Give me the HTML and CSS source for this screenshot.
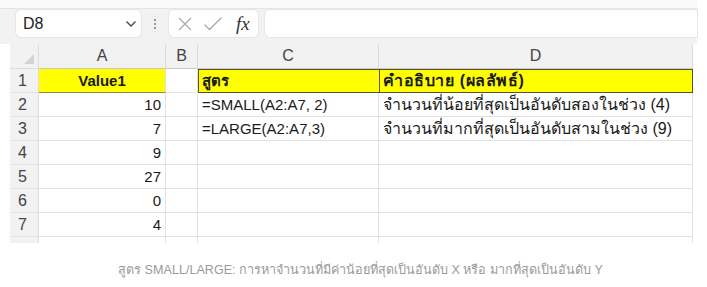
FILE: index.html
```html
<!DOCTYPE html>
<html lang="th">

<head>
    <meta charset="UTF-8">
    <meta name="viewport" content="width=device-width, initial-scale=1.0">
    <title>SMALL / LARGE</title>
    <link rel="stylesheet" href="styles.css">
</head>

<body>
    <div class="shot">
        <div class="top-strip"></div>

        <div class="fbar">
            <div class="namebox">
                <span>D8</span>
                <svg class="chev" width="12" height="8" viewBox="0 0 12 8">
                    <path d="M1.5 1.5 L6 6 L10.5 1.5" fill="none" stroke="#444" stroke-width="1.3"/>
                </svg>
            </div>
            <div class="grip"><i></i><i></i><i></i></div>
            <div class="fxbox">
                <svg width="16" height="16" viewBox="0 0 16 16">
                    <path d="M2 2 L14 14 M14 2 L2 14" stroke="#a8a8a8" stroke-width="1.3"/>
                </svg>
                <svg width="20" height="16" viewBox="0 0 20 16">
                    <path d="M1.5 8.5 L6.5 13.5 L18.5 1.5" fill="none" stroke="#a8a8a8" stroke-width="1.3"/>
                </svg>
                <span class="fx">fx</span>
            </div>
            <div class="finput"></div>
        </div>

        <div class="sheet">
            <div class="corner"><span class="tri"></span></div>
            <div class="colhead">A</div>
            <div class="colhead">B</div>
            <div class="colhead">C</div>
            <div class="colhead">D</div>

            <div class="rowhead">1</div>
            <div class="cell hl center bold a1">Value1</div>
            <div class="cell"></div>
            <div class="cell hl boxed bold">สูตร</div>
            <div class="cell hl boxed bold thai wide last">คำอธิบาย (ผลลัพธ์)</div>

            <div class="rowhead">2</div>
            <div class="cell num">10</div>
            <div class="cell"></div>
            <div class="cell">=SMALL(A2:A7, 2)</div>
            <div class="cell thai">จำนวนที่น้อยที่สุดเป็นอันดับสองในช่วง (4)</div>

            <div class="rowhead">3</div>
            <div class="cell num">7</div>
            <div class="cell"></div>
            <div class="cell">=LARGE(A2:A7,3)</div>
            <div class="cell thai">จำนวนที่มากที่สุดเป็นอันดับสามในช่วง (9)</div>

            <div class="rowhead">4</div>
            <div class="cell num">9</div>
            <div class="cell"></div>
            <div class="cell"></div>
            <div class="cell"></div>

            <div class="rowhead">5</div>
            <div class="cell num">27</div>
            <div class="cell"></div>
            <div class="cell"></div>
            <div class="cell"></div>

            <div class="rowhead">6</div>
            <div class="cell num">0</div>
            <div class="cell"></div>
            <div class="cell"></div>
            <div class="cell"></div>

            <div class="rowhead">7</div>
            <div class="cell num">4</div>
            <div class="cell"></div>
            <div class="cell"></div>
            <div class="cell"></div>

            <div class="rowhead stub"></div>
            <div class="cell stub"></div>
            <div class="cell stub"></div>
            <div class="cell stub"></div>
            <div class="cell stub"></div>
        </div>
    </div>

    <p class="caption">สูตร SMALL/LARGE: การหาจำนวนที่มีค่าน้อยที่สุดเป็นอันดับ X หรือ มากที่สุดเป็นอันดับ Y</p>
</body>

</html>
```

FILE: styles.css
```css
body {
    margin: 0;
    background: white;
    font-family: "Liberation Sans", "Noto Sans", sans-serif;
}

.shot {
    width: 697px;
}

.top-strip {
    height: 8px;
    background: #fafafa;
    border-bottom: 1px solid #e4e4e4;
}

.fbar {
    display: flex;
    align-items: center;
    height: 35px;
    padding: 0 0 6px 16px;
    background: #f2f2f2;
    box-sizing: border-box;
}

.namebox {
    width: 125px;
    height: 27px;
    background: white;
    border-radius: 5px;
    box-shadow: 0 0 0 1px #e6e6e6;
    display: flex;
    align-items: center;
    justify-content: space-between;
    padding: 0 4px 0 7px;
    box-sizing: border-box;
    font-size: 16px;
    color: #222;
}

.grip {
    width: 28px;
    display: flex;
    flex-direction: column;
    align-items: center;
    gap: 2px;
}

.grip i {
    width: 2px;
    height: 2px;
    background: #9a9a9a;
}

.fxbox {
    width: 89px;
    height: 27px;
    background: white;
    border-radius: 5px;
    box-shadow: 0 0 0 1px #e6e6e6;
    display: flex;
    align-items: center;
    gap: 10px;
    padding: 0 6px 0 8px;
    box-sizing: border-box;
}

.fx {
    font-family: "Liberation Serif", serif;
    font-style: italic;
    font-size: 19px;
    color: #333;
    margin-left: 3px;
}

.finput {
    flex: 1;
    height: 27px;
    margin-left: 7px;
    background: white;
    border-radius: 5px 0 0 5px;
    box-shadow: 0 0 0 1px #e6e6e6;
}

.sheet {
    display: grid;
    grid-template-columns: 29px 127px 32px 181px 314px;
    grid-template-rows: 25px repeat(7, 24px) 6px;
    margin-left: 10px;
    background: white;
    font-size: 15px;
    color: #1a1a1a;
}

.corner {
    background: #f2f2f2;
    border-right: 1px solid #dcdcdc;
    border-bottom: 1px solid #dcdcdc;
    position: relative;
}

.tri {
    position: absolute;
    right: 4px;
    bottom: 4px;
    width: 0;
    height: 0;
    border-left: 10px solid transparent;
    border-bottom: 10px solid #d4d4d4;
}

.colhead {
    background: #f2f2f2;
    border-right: 1px solid #dcdcdc;
    border-bottom: 1px solid #c8c8c8;
    color: #444;
    font-size: 16px;
    display: flex;
    align-items: center;
    justify-content: center;
}

.rowhead {
    background: #f2f2f2;
    border-right: 1px solid #dcdcdc;
    border-bottom: 1px solid #e2e2e2;
    color: #444;
    font-size: 16px;
    display: flex;
    align-items: center;
    padding-left: 8px;
}

.cell {
    border-right: 1px solid #e2e2e2;
    border-bottom: 1px solid #e2e2e2;
    display: flex;
    align-items: center;
    padding: 0 4px;
    white-space: nowrap;
    overflow: hidden;
}

.thai {
    font-size: 16px;
}

.wide {
    letter-spacing: 0.6px;
}

.stub {
    border-bottom: none;
}

.num {
    justify-content: flex-end;
    padding-right: 4px;
}

.center {
    justify-content: center;
}

.bold {
    font-weight: bold;
}

.hl {
    background: #ffff00;
}

.a1 {
    border-bottom: 1px solid #8c8c3a;
}

.boxed {
    box-shadow: inset 1px 1px 0 #55552a;
    border-bottom: 1px solid #55552a;
    border-right: none;
}

.last {
    border-right: 1px solid #55552a;
}

.caption {
    margin: 17px 0 0;
    text-align: center;
    font-size: 12.6px;
    color: #9a9a9a;
    padding-left: 14px;
}
```
